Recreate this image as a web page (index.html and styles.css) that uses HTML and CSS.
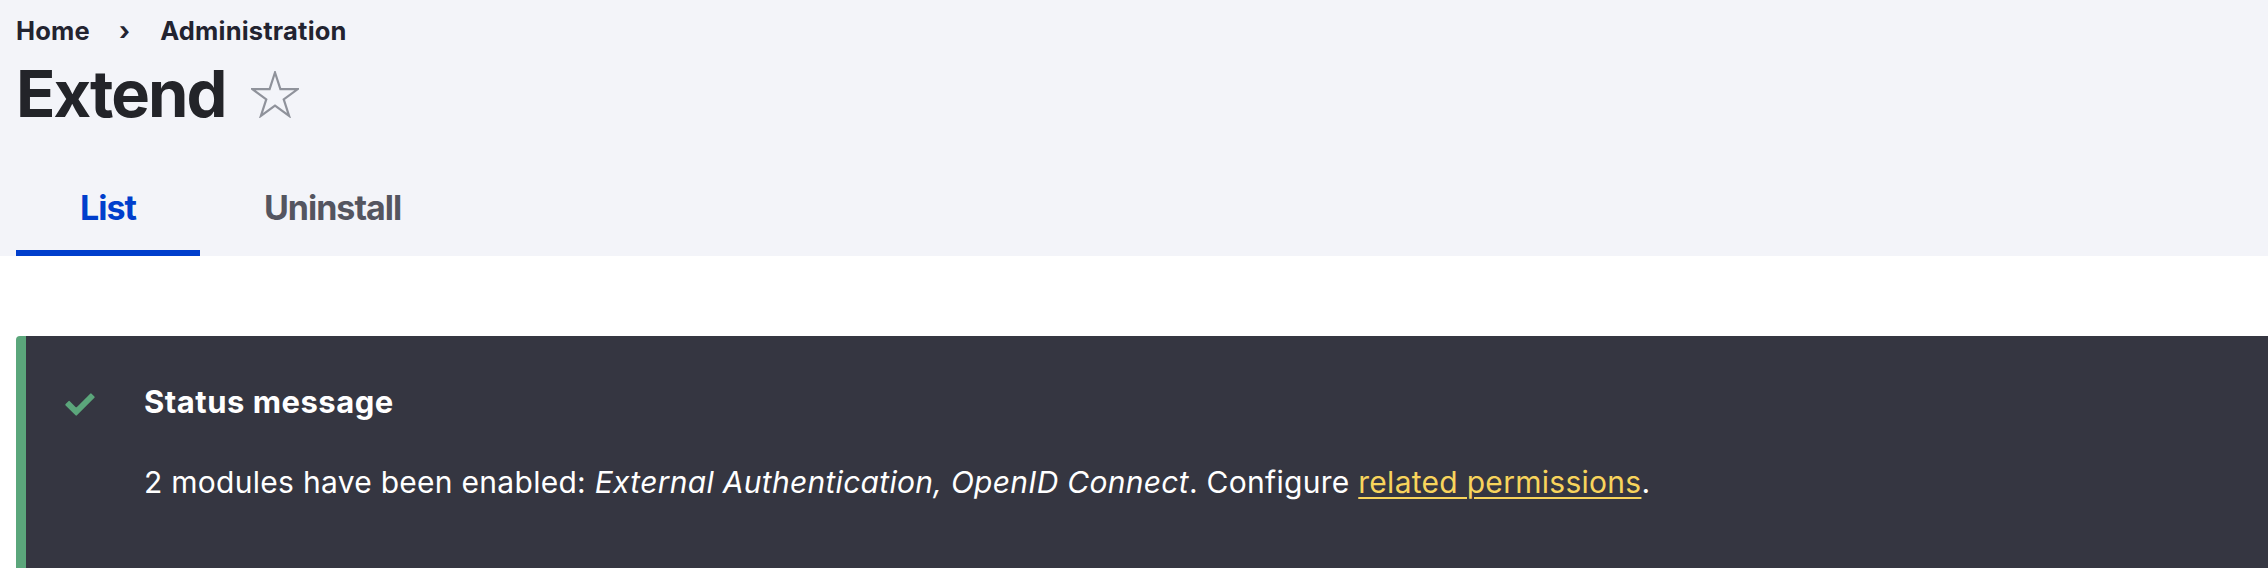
FILE: index.html
```html
<!DOCTYPE html>
<html lang="en">
<head>
<meta charset="utf-8">
<title>Extend</title>
<link rel="stylesheet" href="styles.css">
</head>
<body>
<div class="header">
  <nav class="breadcrumb">
    <a class="crumb" href="#">Home</a>
    <span class="sep">›</span>
    <a class="crumb" href="#">Administration</a>
  </nav>
  <h1 class="title">Extend<svg class="star" width="48" height="47" viewBox="0 0 48 47"><polygon points="24,1.5 29.39,18.08 46.83,18.08 32.72,28.33 38.11,44.92 24,34.67 9.89,44.92 15.28,28.33 1.17,18.08 18.61,18.08" fill="none" stroke="#8f929b" stroke-width="2.2" stroke-linejoin="miter"/></svg></h1>
  <ul class="tabs">
    <li class="tab"><a class="tab-link active" href="#">List</a></li>
    <li class="tab"><a class="tab-link" href="#">Uninstall</a></li>
  </ul>
</div>
<div class="content">
  <div class="messages">
    <div class="messages-header">
      <svg class="check" width="32" height="32" viewBox="0 0 16 16"><path fill="#5ba67b" d="M6.464 13.676a.5.5 0 01-.707 0L.797 8.716a.5.5 0 010-.707l1.405-1.407a.5.5 0 01.707 0l2.849 2.848a.504.504 0 00.707 0l6.629-6.626a.5.5 0 01.707 0l1.404 1.404a.5.5 0 010 .707l-8.741 8.741z"/></svg>
      <h2 class="messages-title">Status message</h2>
    </div>
    <div class="messages-content">2 modules have been enabled: <em>External Authentication, OpenID Connect</em>. Configure <a class="msg-link" href="#">related permissions</a>.</div>
  </div>
</div>
</body>
</html>
```
FILE: styles.css
```css
html, body {
  margin: 0;
  padding: 0;
  height: 568px;
  overflow: hidden;
  background: #ffffff;
  font-family: Inter, "Noto Sans", sans-serif;
  color: #222330;
}

.header {
  background: #f3f4f9;
  padding: 16px 0 0 16px;
}

.breadcrumb {
  display: flex;
  align-items: baseline;
  font-size: 25.5px;
  line-height: 30px;
  font-weight: 700;
  height: 30px;
  letter-spacing: 0.2px;
}

.crumb {
  color: #222330;
  text-decoration: none;
}

.sep {
  font-weight: 700;
  margin: 0 30px 0 29px;
}

.title {
  margin: 8px 0 0 0;
  font-size: 65px;
  line-height: 80px;
  font-weight: 700;
  color: #232429;
  letter-spacing: -2px;
}

.star {
  margin-left: 26px;
  vertical-align: baseline;
  position: relative;
  top: 1px;
}

.tabs {
  list-style: none;
  margin: 26px 0 0 0;
  padding: 0;
  display: flex;
}

.tab-link {
  display: block;
  height: 96px;
  line-height: 96px;
  padding: 0 64px;
  font-size: 34px;
  font-weight: 700;
  letter-spacing: -1px;
  color: #545560;
  text-decoration: none;
}

.tab-link.active {
  color: #003ecc;
  box-shadow: inset 0 -6px 0 #003ecc;
}

.content {
  padding: 80px 0 0 16px;
}

.messages {
  background: #353641;
  border-left: 10px solid #5ba67b;
  border-top-left-radius: 4px;
  padding: 46px 0 100px 38px;
  color: #ffffff;
}

.messages-header {
  display: flex;
  align-items: center;
  height: 40px;
}

.check {
  flex: none;
  margin-right: 48px;
  position: relative;
  top: 2px;
}

.messages-title {
  margin: 0;
  font-size: 31px;
  line-height: 40px;
  font-weight: 700;
  letter-spacing: 0.5px;
}

.messages-content {
  margin: 38px 0 0 80px;
  font-size: 30px;
  line-height: 45px;
  letter-spacing: 0.28px;
}

.messages-content em {
  font-style: italic;
}

.msg-link {
  color: #f8d45c;
  text-decoration: underline;
  text-decoration-thickness: 2px;
  text-underline-offset: 4px;
}
```
